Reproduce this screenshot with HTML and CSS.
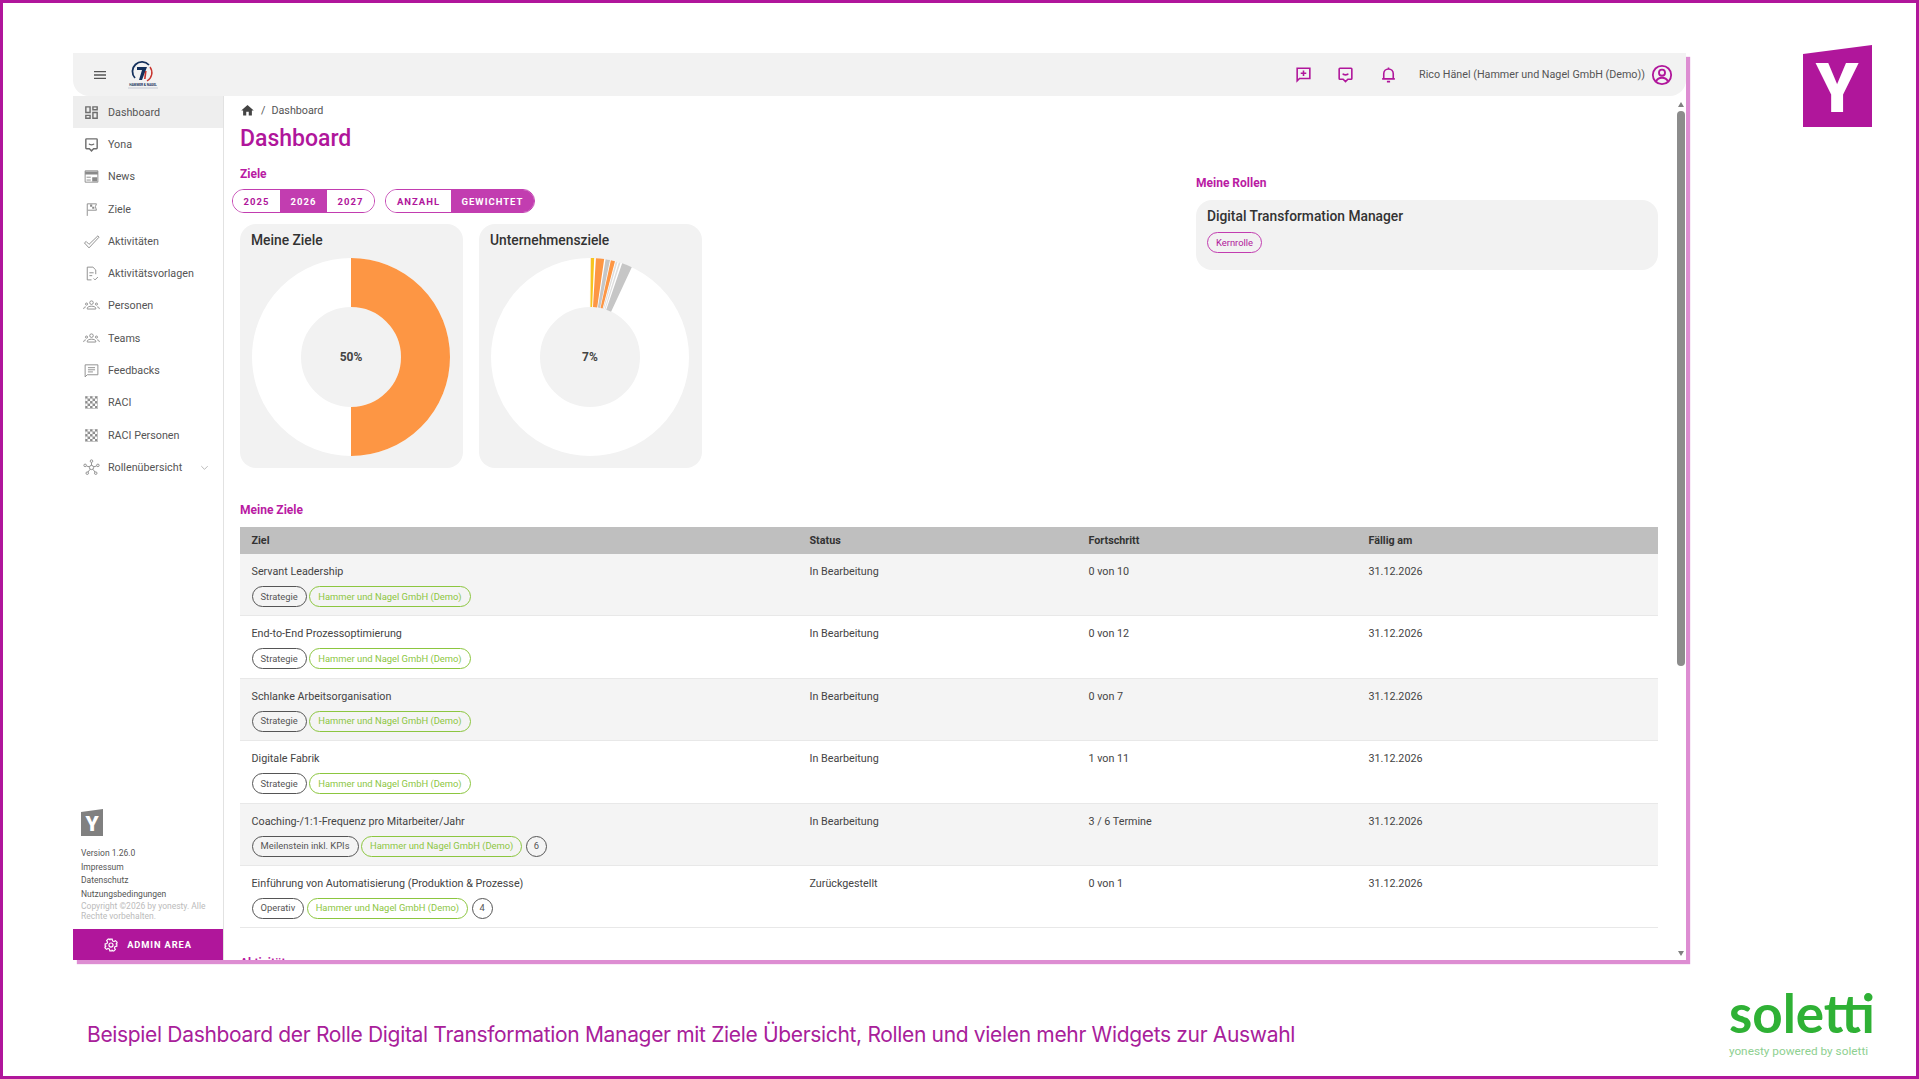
FILE: index.html
```html
<!DOCTYPE html>
<html lang="de">
<head>
    <meta charset="UTF-8">
    <meta name="viewport" content="width=device-width, initial-scale=1.0">
    <title>Dashboard</title>
    <link rel="stylesheet" href="styles.css">
</head>
<body>
<div class="slide">
    <div class="slide-top">
        <div class="window">
            <header class="topbar">
                <svg class="menu-icon" viewBox="0 0 24 24"><path d="M3 18h18v-2H3v2zm0-5h18v-2H3v2zm0-7v2h18V6H3z"/></svg>
                <svg class="company-logo" viewBox="0 0 34 30">
                    <path d="M9 18a9.500 9.500 0 0 1 14-13" fill="none" stroke="#14305c" stroke-width="1.800"/>
                    <path d="M11 7h10l-5 13h-3l3-10h-5z" fill="#14305c"/>
                    <path d="M24 7a9.500 9.500 0 0 1-3 14" fill="none" stroke="#c8352f" stroke-width="1.400"/>
                    <path d="M19 11h1.600l-1 8h-1.600z" fill="#c8352f"/>
                    <text x="17" y="26" text-anchor="middle" class="company-text">HAMMER &amp; NAGEL</text>
                    <path d="M2 28h30" stroke="#9aa3b5" stroke-width=".5"/>
                </svg>
                <div class="topbar-right">
                    <svg class="top-icon" viewBox="0 0 24 24"><path d="M4 4h16v13H7l-3 3z" fill="none" stroke-width="2"/><path d="M12 7v7M8.500 10.500h7" fill="none" stroke-width="2"/></svg>
                    <svg class="top-icon" viewBox="0 0 24 24"><path d="M5 4h14a1 1 0 0 1 1 1v12a1 1 0 0 1-1 1h-4l-3 3-3-3H5a1 1 0 0 1-1-1V5a1 1 0 0 1 1-1z" fill="none" stroke-width="2"/><path d="M8.500 11c1 2 6 2 7 0" fill="none" stroke-width="2"/></svg>
                    <svg class="top-icon" viewBox="0 0 24 24"><path d="M6 17V11a6 6 0 0 1 12 0v6M4 17.500h16M10 21h4M12 3v2" fill="none" stroke-width="2"/></svg>
                    <span class="user-name">Rico Hänel (Hammer und Nagel GmbH (Demo))</span>
                    <svg class="user-icon" viewBox="0 0 24 24"><circle cx="12" cy="12" r="10" fill="none" stroke-width="2"/><circle cx="12" cy="9.500" r="3.300" fill="none" stroke-width="2"/><path d="M5.500 19c1.500-3 4-4 6.500-4s5 1 6.500 4" fill="none" stroke-width="2"/></svg>
                </div>
            </header>
            <div class="window-body">
                <nav class="sidebar">
                    <svg class="defs" width="0" height="0">
                        <pattern id="checker" width="7" height="7" patternUnits="userSpaceOnUse" x="3" y="3">
                            <rect x="3.500" width="3.500" height="3.500" fill="#fff"/>
                            <rect y="3.500" width="3.500" height="3.500" fill="#fff"/>
                        </pattern>
                    </svg>
                    <ul class="nav-list">
                        <li class="nav-item active"><svg viewBox="0 0 24 24"><path d="M19 5v2h-4V5h4M9 5v6H5V5h4m10 8v6h-4v-6h4M9 17v2H5v-2h4M21 3h-8v6h8V3zM11 3H3v10h8V3zm10 8h-8v10h8V11zm-10 4H3v6h8v-6z"/></svg>Dashboard</li>
                        <li class="nav-item"><svg viewBox="0 0 24 24"><path d="M5 4h14a1 1 0 0 1 1 1v12a1 1 0 0 1-1 1h-4l-3 3-3-3H5a1 1 0 0 1-1-1V5a1 1 0 0 1 1-1z" class="line"/><path d="M8.500 11c1 2 6 2 7 0" class="line"/></svg>Yona</li>
                        <li class="nav-item"><svg viewBox="0 0 24 24"><path d="M3 4h18v16H3z" class="line thin"/><path d="M3 5h18v4H3zM13 13h7v6h-7z" class="soft"/><path d="M5 13h6M5 17h6" class="line thin"/></svg>News</li>
                        <li class="nav-item"><svg viewBox="0 0 24 24"><path d="M6 21V4h13l-1.500 4 1.500 5H7" class="line thin"/><path d="M10 5h3v3h-3zM13 8h3v3h-3z" class="soft"/></svg>Ziele</li>
                        <li class="nav-item"><svg viewBox="0 0 24 24"><path d="M2 14l2.500-2 4 4L21 4l1.500 2L8.500 21z" class="line thin"/></svg>Aktivitäten</li>
                        <li class="nav-item"><svg viewBox="0 0 24 24"><path d="M12 21H6V3h8l4 4v6" class="line thin"/><path d="M9 11h6M9 15h4" class="line thin"/><path d="M15 19l2 2 4-4" class="line thin"/></svg>Aktivitätsvorlagen</li>
                        <li class="nav-item"><svg viewBox="0 0 24 24"><circle cx="12" cy="8" r="2.500" class="line thin"/><circle cx="5" cy="10" r="1.500" class="line thin"/><circle cx="19" cy="10" r="1.500" class="line thin"/><path d="M6 17v-1c0-2 3-3 6-3s6 1 6 3v1zM1 17c0-2 1-3 3-3M23 17c0-2-1-3-3-3" class="line thin"/></svg>Personen</li>
                        <li class="nav-item"><svg viewBox="0 0 24 24"><circle cx="12" cy="8" r="2.500" class="line thin"/><circle cx="5" cy="10" r="1.500" class="line thin"/><circle cx="19" cy="10" r="1.500" class="line thin"/><path d="M6 17v-1c0-2 3-3 6-3s6 1 6 3v1zM1 17c0-2 1-3 3-3M23 17c0-2-1-3-3-3" class="line thin"/></svg>Teams</li>
                        <li class="nav-item"><svg viewBox="0 0 24 24"><path d="M3 4h18v14H6l-3 3z" class="line thin"/><path d="M7 8h10M7 11h10M7 14h7" class="line thin"/></svg>Feedbacks</li>
                        <li class="nav-item"><svg viewBox="0 0 24 24"><rect x="3" y="3" width="18" height="18" class="soft"/><rect x="3" y="3" width="18" height="18" fill="url(#checker)"/></svg>RACI</li>
                        <li class="nav-item"><svg viewBox="0 0 24 24"><rect x="3" y="3" width="18" height="18" class="soft"/><rect x="3" y="3" width="18" height="18" fill="url(#checker)"/></svg>RACI Personen</li>
                        <li class="nav-item"><svg viewBox="0 0 24 24"><circle cx="12" cy="12" r="3" class="line thin"/><circle cx="12" cy="3" r="1.800" class="line thin"/><circle cx="3" cy="9" r="1.800" class="line thin"/><circle cx="21" cy="9" r="1.800" class="line thin"/><circle cx="6" cy="20" r="1.800" class="line thin"/><circle cx="18" cy="20" r="1.800" class="line thin"/><path d="M12 5v4M5 10l4 1M19 10l-4 1M7 18.500l3-4M17 18.500l-3-4" class="line thin"/></svg>Rollenübersicht<svg class="chevron" viewBox="0 0 24 24"><path d="M5 9l7 7 7-7" class="line thin"/></svg></li>
                    </ul>
                    <div class="side-footer">
                        <svg class="side-logo" viewBox="0 0 22 27">
                            <path d="M0 3L22 0v27H0z" fill="#808080"/>
                            <text x="11" y="22" text-anchor="middle" class="side-logo-y">Y</text>
                        </svg>
                        <div class="side-links">
                            <a>Version 1.26.0</a>
                            <a>Impressum</a>
                            <a>Datenschutz</a>
                            <a>Nutzungsbedingungen</a>
                        </div>
                        <p class="copyright">Copyright ©2026 by yonesty. Alle Rechte vorbehalten.</p>
                    </div>
                    <div class="admin-area">
                        <svg viewBox="0 0 24 24"><path d="M10 2h4l.6 3 2.500 1.100 2.600-1.600 2.800 2.800-1.600 2.600L22 10v4l-3 .6-1.100 2.500 1.600 2.600-2.800 2.800-2.600-1.600-.1 1.100-.6 0H10l-.6-3-2.500-1.100-2.600 1.600-2.800-2.800 1.600-2.600L2 14v-4l3-.6 1.100-2.500-1.600-2.600 2.800-2.800 2.600 1.600z" class="gear"/><circle cx="12" cy="12" r="3.500" class="gear"/></svg>
                        ADMIN AREA
                    </div>
                </nav>
                <main class="content">
                    <div class="breadcrumb">
                        <svg viewBox="0 0 24 24"><path d="M10 20v-6h4v6h5v-8h3L12 3 2 12h3v8z"/></svg>
                        <span class="crumb-sep">/</span>
                        <span>Dashboard</span>
                    </div>
                    <h1 class="page-title">Dashboard</h1>

                    <div class="widgets">
                        <section class="goals-widget">
                            <h2 class="section-label">Ziele</h2>
                            <div class="toggles">
                                <div class="toggle-group">
                                    <button class="toggle year">2025</button>
                                    <button class="toggle year on">2026</button>
                                    <button class="toggle year">2027</button>
                                </div>
                                <div class="toggle-group">
                                    <button class="toggle count">ANZAHL</button>
                                    <button class="toggle weight on">GEWICHTET</button>
                                </div>
                            </div>
                            <div class="chart-cards">
                                <div class="chart-card">
                                    <h3>Meine Ziele</h3>
                                    <svg class="donut" viewBox="0 0 198 198">
                                        <circle cx="99" cy="99" r="74.500" class="ring"/>
                                        <g transform="rotate(-90 99 99)">
                                            <circle cx="99" cy="99" r="74.500" pathLength="360" stroke-dasharray="180 360" class="seg orange"/>
                                        </g>
                                        <text x="99" y="103" text-anchor="middle" class="donut-value">50%</text>
                                    </svg>
                                </div>
                                <div class="chart-card">
                                    <h3>Unternehmensziele</h3>
                                    <svg class="donut" viewBox="0 0 198 198">
                                        <circle cx="99" cy="99" r="74.500" class="ring"/>
                                        <g transform="rotate(-90 99 99)">
                                            <circle cx="99" cy="99" r="74.500" pathLength="360" stroke-dasharray="0.400 360" class="seg pale-orange"/>
                                            <circle cx="99" cy="99" r="74.500" pathLength="360" stroke-dasharray="1.900 360" stroke-dashoffset="-0.600" class="seg yellow"/>
                                            <circle cx="99" cy="99" r="74.500" pathLength="360" stroke-dasharray="4.800 360" stroke-dashoffset="-3.500" class="seg orange"/>
                                            <circle cx="99" cy="99" r="74.500" pathLength="360" stroke-dasharray="2.600 360" stroke-dashoffset="-9.100" class="seg grey"/>
                                            <circle cx="99" cy="99" r="74.500" pathLength="360" stroke-dasharray="2.500 360" stroke-dashoffset="-12.200" class="seg orange"/>
                                            <circle cx="99" cy="99" r="74.500" pathLength="360" stroke-dasharray="1 360" stroke-dashoffset="-15.200" class="seg light"/>
                                            <circle cx="99" cy="99" r="74.500" pathLength="360" stroke-dasharray="1 360" stroke-dashoffset="-17" class="seg light"/>
                                            <circle cx="99" cy="99" r="74.500" pathLength="360" stroke-dasharray="6 360" stroke-dashoffset="-19" class="seg grey"/>
                                        </g>
                                        <text x="99" y="103" text-anchor="middle" class="donut-value">7%</text>
                                    </svg>
                                </div>
                            </div>
                        </section>
                        <section class="roles-widget">
                            <h2 class="section-label">Meine Rollen</h2>
                            <div class="role-card">
                                <h3>Digital Transformation Manager</h3>
                                <span class="pill role">Kernrolle</span>
                            </div>
                        </section>
                    </div>

                    <h2 class="section-label table-label">Meine Ziele</h2>
                    <div class="goals-table">
                        <div class="goal-row head">
                            <div>Ziel</div><div>Status</div><div>Fortschritt</div><div>Fällig am</div>
                        </div>
                        <div class="goal-row">
                            <div>Servant Leadership<div class="pills"><span class="pill">Strategie</span><span class="pill green">Hammer und Nagel GmbH (Demo)</span></div></div>
                            <div>In Bearbeitung</div><div>0 von 10</div><div>31.12.2026</div>
                        </div>
                        <div class="goal-row">
                            <div>End-to-End Prozessoptimierung<div class="pills"><span class="pill">Strategie</span><span class="pill green">Hammer und Nagel GmbH (Demo)</span></div></div>
                            <div>In Bearbeitung</div><div>0 von 12</div><div>31.12.2026</div>
                        </div>
                        <div class="goal-row">
                            <div>Schlanke Arbeitsorganisation<div class="pills"><span class="pill">Strategie</span><span class="pill green">Hammer und Nagel GmbH (Demo)</span></div></div>
                            <div>In Bearbeitung</div><div>0 von 7</div><div>31.12.2026</div>
                        </div>
                        <div class="goal-row">
                            <div>Digitale Fabrik<div class="pills"><span class="pill">Strategie</span><span class="pill green">Hammer und Nagel GmbH (Demo)</span></div></div>
                            <div>In Bearbeitung</div><div>1 von 11</div><div>31.12.2026</div>
                        </div>
                        <div class="goal-row">
                            <div>Coaching-/1:1-Frequenz pro Mitarbeiter/Jahr<div class="pills"><span class="pill">Meilenstein inkl. KPIs</span><span class="pill green">Hammer und Nagel GmbH (Demo)</span><span class="pill circle">6</span></div></div>
                            <div>In Bearbeitung</div><div>3 / 6 Termine</div><div>31.12.2026</div>
                        </div>
                        <div class="goal-row">
                            <div>Einführung von Automatisierung (Produktion &amp; Prozesse)<div class="pills"><span class="pill">Operativ</span><span class="pill green">Hammer und Nagel GmbH (Demo)</span><span class="pill circle">4</span></div></div>
                            <div>Zurückgestellt</div><div>0 von 1</div><div>31.12.2026</div>
                        </div>
                    </div>
                    <h2 class="section-label next-label">Aktivitäten</h2>
                </main>
                <div class="scrollbar">
                    <span class="arrow-up"></span>
                    <span class="thumb"></span>
                    <span class="arrow-down"></span>
                </div>
            </div>
        </div>
        <svg class="brand-mark" viewBox="0 0 69 82">
            <path d="M0 9L69 0v82H0z" fill="#b0169b"/>
            <text x="34" y="67" text-anchor="middle" class="brand-y">Y</text>
        </svg>
    </div>
    <div class="slide-bottom">
        <p class="caption">Beispiel Dashboard der Rolle Digital Transformation Manager mit Ziele Übersicht, Rollen und vielen mehr Widgets zur Auswahl</p>
        <div class="soletti">
            <div class="soletti-name">soletti</div>
            <div class="soletti-sub">yonesty powered by soletti</div>
        </div>
    </div>
</div>
</body>
</html>
```

FILE: styles.css
```css
* {
    box-sizing: border-box;
}
body {
    margin: 0;
    background-color: #fff;
    font-family: Roboto, "Liberation Sans", sans-serif;
    color: #444;
}
h1, h2, h3, p, ul {
    margin: 0;
    padding: 0;
}
.slide {
    width: 1919px;
    height: 1079px;
    border: 3px solid #b0169b;
    padding: 50px 0 0 70px;
    overflow: hidden;
}
.slide-top {
    display: flex;
    align-items: flex-start;
}
.window {
    width: 1613px;
    height: 907px;
    flex: none;
    display: flex;
    flex-direction: column;
    background-color: #fff;
    box-shadow: 4px 4px 1px #dd8dd2;
}
.brand-mark {
    width: 69px;
    height: 82px;
    flex: none;
    margin: -8px 0 0 117px;
    overflow: visible;
}
.brand-y {
    font: 900 68px Roboto, sans-serif;
    fill: #fff;
}

/* top bar */
.topbar {
    height: 43px;
    flex: none;
    display: flex;
    align-items: center;
    padding: 0 13px 0 19px;
    background-color: #f2f2f2;
    border-radius: 0 0 16px 16px;
}
.menu-icon {
    width: 16px;
    height: 16px;
    fill: #555;
}
.company-logo {
    width: 36px;
    height: 30px;
    margin-left: 17px;
}
.company-text {
    font: 700 3.200px Roboto, sans-serif;
    fill: #14305c;
}
.topbar-right {
    margin-left: auto;
    display: flex;
    align-items: center;
}
.top-icon {
    width: 19px;
    height: 19px;
    margin-right: 23.500px;
    stroke: #b0169b;
}
.top-icon:nth-child(3) {
    margin-right: 21.500px;
}
.user-name {
    font-size: 10.750px;
    color: #555;
}
.user-icon {
    width: 22px;
    height: 22px;
    margin-left: 6px;
    stroke: #b0169b;
}

.window-body {
    flex: 1;
    min-height: 0;
    display: flex;
}

/* sidebar */
.sidebar {
    width: 151px;
    flex: none;
    display: flex;
    flex-direction: column;
    border-right: 1.500px solid #e2e2e2;
}
.defs {
    position: absolute;
}
.nav-list {
    list-style: none;
}
.nav-item {
    height: 32.300px;
    display: flex;
    align-items: center;
    padding-left: 10px;
    font-size: 10.750px;
    color: #555;
}
.nav-item.active {
    background-color: #eee;
}
.nav-item svg {
    width: 17px;
    height: 17px;
    margin-right: 8px;
    fill: #6e6e6e;
    flex: none;
}
.nav-item svg .line {
    fill: none;
    stroke: #6e6e6e;
    stroke-width: 2;
}
.nav-item svg .thin {
    stroke-width: 1.300;
    stroke: #8a8a8a;
}
.nav-item svg .soft {
    fill: #8a8a8a;
}
.nav-item .chevron {
    width: 11px;
    height: 11px;
    margin: 0 13px 0 auto;
}
.side-footer {
    margin-top: auto;
    padding: 0 8px 8px;
}
.side-logo {
    width: 22px;
    height: 27px;
    display: block;
    margin-bottom: 11px;
}
.side-logo-y {
    font: 900 21px Roboto, sans-serif;
    fill: #fff;
}
.side-links a {
    display: block;
    font-size: 8.500px;
    line-height: 13.400px;
    color: #555;
}
.copyright {
    font-size: 8.500px;
    line-height: 10px;
    color: #bbb;
}
.admin-area {
    height: 31px;
    flex: none;
    display: flex;
    align-items: center;
    justify-content: center;
    background-color: #b0169b;
    color: #fff;
    font-size: 9.300px;
    font-weight: 700;
    letter-spacing: .9px;
}
.admin-area svg {
    width: 14px;
    height: 14px;
    margin-right: 9px;
}
.gear {
    fill: none;
    stroke: #fff;
    stroke-width: 2;
}

/* main */
.content {
    flex: 1;
    min-width: 0;
    padding: 0 16px 0 16px;
    overflow: hidden;
}
.breadcrumb {
    height: 28px;
    display: flex;
    align-items: center;
    font-size: 10.750px;
    color: #555;
}
.breadcrumb svg {
    width: 15px;
    height: 15px;
    fill: #444;
}
.crumb-sep {
    margin: 0 6px 0 6px;
}
.page-title {
    font-size: 23px;
    line-height: 28px;
    font-weight: 500;
    color: #b0169b;
    margin: 1px 0 13px;
}
.section-label {
    font-size: 12px;
    line-height: 16px;
    font-weight: 700;
    color: #b91ba3;
}
.widgets {
    display: flex;
    justify-content: space-between;
}
.toggles {
    display: flex;
    gap: 10px;
    margin: 7px 0 11px -8px;
}
.toggle-group {
    display: flex;
    height: 24px;
    border: 1px solid #c23db0;
    border-radius: 12px;
    overflow: hidden;
}
.toggle {
    border: 0;
    padding: 0;
    background-color: #fff;
    color: #b0169b;
    font-family: Roboto, sans-serif;
    font-size: 9.500px;
    font-weight: 700;
    letter-spacing: 1px;
}
.toggle.on {
    background-color: #c23db0;
    color: #fff;
}
.toggle.year {
    width: 47px;
}
.toggle.count {
    width: 65px;
}
.toggle.weight {
    width: 83px;
}
.chart-cards {
    display: flex;
    gap: 16px;
}
.chart-card {
    width: 223px;
    height: 244px;
    background-color: #f2f2f2;
    border-radius: 16px;
    padding: 6px 12px 0 11px;
}
.chart-card h3 {
    font-size: 13.800px;
    line-height: 20px;
    font-weight: 500;
    color: #333;
}
.donut {
    display: block;
    width: 198px;
    height: 198px;
    margin: 8px 0 0 1px;
}
.ring, .seg {
    fill: none;
    stroke-width: 49;
}
.ring {
    stroke: #fff;
}
.seg.orange {
    stroke: #fd9644;
}
.seg.pale-orange {
    stroke: #fbd9a8;
}
.seg.yellow {
    stroke: #f7c41f;
}
.seg.grey {
    stroke: #c6c6c6;
}
.seg.light {
    stroke: #dedede;
}
.donut-value {
    font: 700 12px Roboto, sans-serif;
    fill: #444;
}
.roles-widget {
    width: 462px;
    padding-top: 9px;
}
.role-card {
    height: 70px;
    margin-top: 9px;
    padding: 6px 11px;
    background-color: #f2f2f2;
    border-radius: 16px;
}
.role-card h3 {
    font-size: 13.800px;
    line-height: 20px;
    font-weight: 500;
    color: #333;
    margin-bottom: 5px;
}
.table-label {
    margin-top: 34px;
}
.goals-table {
    margin-top: 9px;
}
.goal-row {
    display: grid;
    grid-template-columns: 558px 279px 280px 1fr;
    height: 62.400px;
    padding: 10px 0 0 11.500px;
    font-size: 10.750px;
    line-height: 16px;
    color: #444;
    border-bottom: 1.500px solid #e8e8e8;
}
.goal-row:nth-child(even) {
    background-color: #f4f4f4;
}
.goal-row.head {
    height: 27px;
    padding-top: 6px;
    background-color: #bfbfbf;
    font-weight: 700;
    color: #333;
    border-bottom: 0;
}
.pills {
    display: flex;
    gap: 2.500px;
    margin-top: 6px;
}
.pill {
    display: inline-flex;
    align-items: center;
    height: 21px;
    padding: 0 8px;
    border: 1px solid #555;
    border-radius: 11px;
    font-size: 9.400px;
    color: #555;
    white-space: nowrap;
}
.pill.green {
    border-color: #8cc63f;
    color: #8cc63f;
}
.pill.circle {
    width: 21px;
    padding: 0;
    justify-content: center;
    margin-left: 1px;
}
.pill.role {
    border-color: #c23db0;
    color: #b0169b;
}
.next-label {
    margin-top: 27px;
}

/* scrollbar */
.scrollbar {
    width: 12px;
    flex: none;
    display: flex;
    flex-direction: column;
    align-items: center;
    padding: 6px 1px 4px 2px;
}
.thumb {
    width: 8px;
    height: 555px;
    margin-top: 4px;
    background-color: #8c8c8c;
    border-radius: 4px;
}
.arrow-up, .arrow-down {
    width: 0;
    height: 0;
    border-left: 3.500px solid transparent;
    border-right: 3.500px solid transparent;
}
.arrow-up {
    border-bottom: 5px solid #808080;
}
.arrow-down {
    margin-top: auto;
    border-top: 5px solid #808080;
}

/* slide footer */
.slide-bottom {
    display: flex;
    align-items: flex-start;
    padding-left: 14px;
}
.caption {
    margin-top: 60px;
    font-family: Inter, sans-serif;
    font-size: 21px;
    letter-spacing: -.33px;
    line-height: 30px;
    color: #a8209a;
    white-space: nowrap;
}
.soletti {
    margin-left: auto;
    margin-right: 41px;
    margin-top: 21.500px;
}
.soletti-name {
    font-family: Lato, sans-serif;
    font-weight: 700;
    font-size: 53px;
    line-height: 62px;
    color: #2fb135;
}
.soletti-sub {
    font-size: 11.800px;
    line-height: 14px;
    color: #8ed090;
}
```
